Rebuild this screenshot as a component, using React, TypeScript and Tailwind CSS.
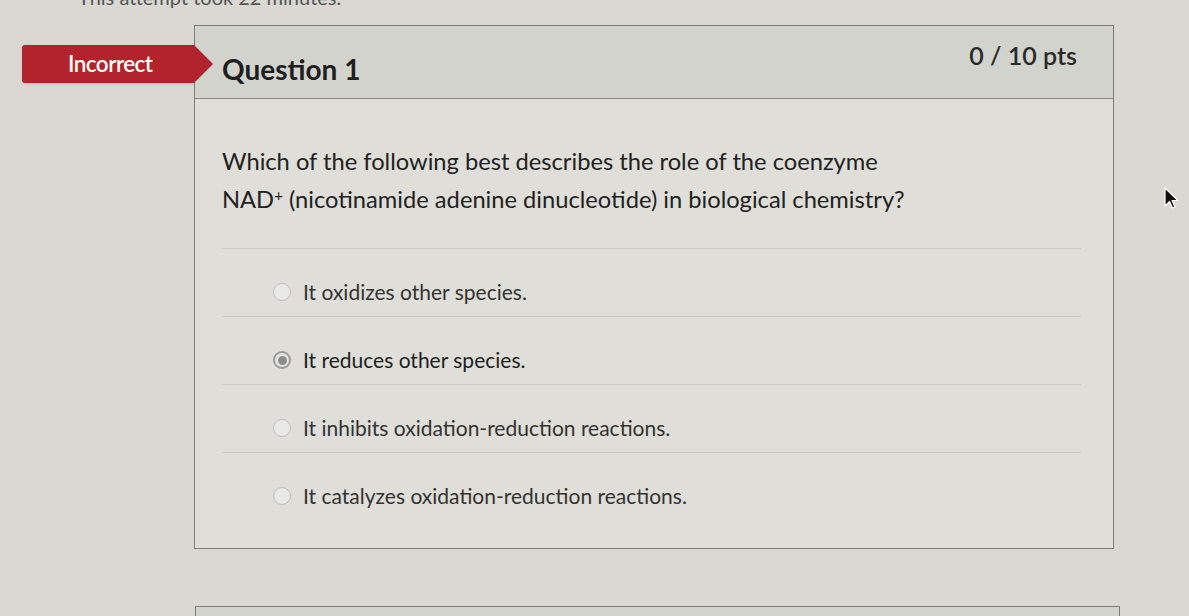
import React from "react";

const options = [
    { text: "It oxidizes other species.", selected: false },
    { text: "It reduces other species.", selected: true },
    { text: "It inhibits oxidation-reduction reactions.", selected: false },
    { text: "It catalyzes oxidation-reduction reactions.", selected: false },
];

function Radio({ selected }: { selected: boolean }) {
    if (selected) {
        return (
            <span className="w-[18px] h-[18px] rounded-full border-2 border-[#9a9a98] bg-[#e6e6e2] flex items-center justify-center shrink-0">
                <span className="w-[9px] h-[9px] rounded-full bg-[#8c8c8a]" />
            </span>
        );
    }
    return <span className="w-[18px] h-[18px] rounded-full border border-[#bdbdb9] bg-[#e9e9e5] shrink-0" />;
}

export default function App() {
    return (
        <div
            className="relative w-[1189px] h-[616px] overflow-hidden bg-[#d9d8d3] text-[#262626]"
            style={{ fontFamily: "Lato, 'Open Sans', sans-serif" }}
        >
            {/* attempt info, cut off at the top */}
            <p className="-mt-[15px] pl-[78px] text-[20px] leading-[24px] text-[#555]">This attempt took 22 minutes.</p>

            <div className="flex mt-[16px]">
                {/* Result badge column */}
                <div className="w-[194px] shrink-0 pt-[20px] pl-[22px]">
                    <div className="relative z-10 w-[172px] h-[38px] bg-[#b3232b] rounded-l-[3px] flex items-center pl-[46px] shadow-sm">
                        <span className="text-white text-[22.5px] font-semibold tracking-tight">Incorrect</span>
                        <span className="absolute -right-[19px] top-0 w-0 h-0 border-t-[19px] border-b-[19px] border-l-[19px] border-t-transparent border-b-transparent border-l-[#b3232b]" />
                    </div>
                </div>

                {/* Question card */}
                <div className="w-[920px] border-[1.5px] border-[#7d7d7a] bg-[#dfded9]">
                    <div className="h-[73px] bg-[#d3d3cd] border-b-[1.5px] border-[#8a8a87] flex justify-between pl-[27px] pr-[36px]">
                        <h2 className="pt-[26px] text-[28px] font-bold leading-[34px] text-[#1e1e1e]">Question 1</h2>
                        <span className="pt-[13px] text-[25px] font-semibold leading-[32px] text-[#2a2a2a]">0 / 10 pts</span>
                    </div>

                    <div className="pl-[27px] pr-[32px] pt-[43px] pb-[38px]">
                        <p className="text-[23.7px] leading-[38px] text-[#222]">
                            Which of the following best describes the role of the coenzyme
                            <br />
                            NAD<sup className="text-[15px]">+</sup> (nicotinamide adenine dinucleotide) in biological chemistry?
                        </p>

                        <div className="mt-[30px] border-t border-[#cacac5]">
                            {options.map((o, i) => (
                                <div
                                    key={o.text}
                                    className={`flex items-center gap-[12px] pl-[51px] pt-[29px] ${
                                        i < options.length - 1 ? "pb-[10px] border-b border-[#cacac5]" : ""
                                    }`}
                                >
                                    <Radio selected={o.selected} />
                                    <span className={`text-[21px] leading-[28px] ${o.selected ? "text-[#1e1e1e]" : "text-[#333]"}`}>
                                        {o.text}
                                    </span>
                                </div>
                            ))}
                        </div>
                    </div>
                </div>
            </div>

            {/* next question card, top edge only */}
            <div className="ml-[195px] mt-[57px] w-[925px] h-[40px] border-[1.5px] border-[#7d7d7a] bg-[#d3d3cd]" />

            {/* mouse pointer */}
            <svg className="absolute left-[1163px] top-[187px]" width="18" height="24" viewBox="0 0 18 24">
                <path d="M2 1 L2 19 L6.5 14.5 L9.5 21 L12 20 L9 13.5 L15 13.5 Z" fill="#111" stroke="#fff" strokeWidth="1.2" strokeLinejoin="round" />
            </svg>
        </div>
    );
}
